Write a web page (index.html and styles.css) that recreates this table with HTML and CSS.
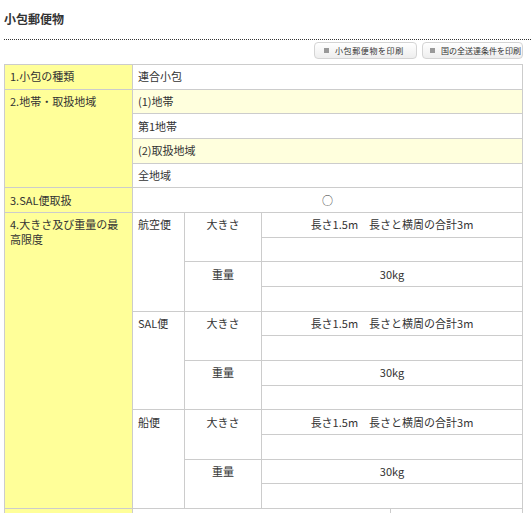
FILE: index.html
```html
<!DOCTYPE html>
<html lang="ja">
<head>
<meta charset="utf-8">
<title>小包郵便物</title>
<link rel="stylesheet" href="styles.css">
</head>
<body>
<h1 class="title">小包郵便物</h1>
<div class="rule"></div>
<div class="actions">
  <span class="btn btn-a"><span class="bullet"></span>小包郵便物を印刷</span>
  <span class="btn btn-b"><span class="bullet"></span>国の全送達条件を印刷</span>
</div>
<table class="info">
  <colgroup>
    <col class="c1"><col class="c2"><col class="c3"><col class="c4">
  </colgroup>
  <tr>
    <th>1.小包の種類</th>
    <td colspan="3">連合小包</td>
  </tr>
  <tr>
    <th rowspan="4">2.地帯・取扱地域</th>
    <td colspan="3" class="sub">(1)地帯</td>
  </tr>
  <tr><td colspan="3">第1地帯</td></tr>
  <tr><td colspan="3" class="sub">(2)取扱地域</td></tr>
  <tr><td colspan="3">全地域</td></tr>
  <tr>
    <th>3.SAL便取扱</th>
    <td colspan="3" class="center">○</td>
  </tr>
  <tr>
    <th rowspan="12">4.大きさ及び重量の最高限度</th>
    <td rowspan="4">航空便</td>
    <td rowspan="2" class="center">大きさ</td>
    <td class="center">長さ1.5m　長さと横周の合計3m</td>
  </tr>
  <tr><td>&nbsp;</td></tr>
  <tr>
    <td rowspan="2" class="center">重量</td>
    <td class="center">30kg</td>
  </tr>
  <tr><td>&nbsp;</td></tr>
  <tr>
    <td rowspan="4">SAL便</td>
    <td rowspan="2" class="center">大きさ</td>
    <td class="center">長さ1.5m　長さと横周の合計3m</td>
  </tr>
  <tr><td>&nbsp;</td></tr>
  <tr>
    <td rowspan="2" class="center">重量</td>
    <td class="center">30kg</td>
  </tr>
  <tr><td>&nbsp;</td></tr>
  <tr>
    <td rowspan="4">船便</td>
    <td rowspan="2" class="center">大きさ</td>
    <td class="center">長さ1.5m　長さと横周の合計3m</td>
  </tr>
  <tr><td>&nbsp;</td></tr>
  <tr>
    <td rowspan="2" class="center">重量</td>
    <td class="center">30kg</td>
  </tr>
  <tr><td>&nbsp;</td></tr>
  <tr>
    <th>&nbsp;</th>
    <td colspan="3" class="split">
      <div class="split-row"><div class="split-a">&nbsp;</div><div class="split-b">&nbsp;</div></div>
    </td>
  </tr>
</table>
</body>
</html>
```

FILE: styles.css
```css
html, body {
  margin: 0;
  padding: 0;
  background: #fff;
}
body {
  font-family: "Noto Sans CJK JP", "Noto Sans", sans-serif;
  color: #333;
  font-size: 11px;
}
.title {
  margin: 0;
  padding: 10px 0 0 4px;
  font-size: 12px;
  line-height: 17px;
  font-weight: bold;
  color: #333;
}
.rule {
  margin: 12px 0 0 4px;
  border-top: 1px dotted #333;
}
.actions {
  display: flex;
  justify-content: flex-end;
  gap: 5px;
  padding: 2px 8px 0 0;
  height: 17px;
}
.btn {
  box-sizing: border-box;
  height: 17px;
  display: flex;
  align-items: center;
  border: 1px solid #d4d4d4;
  border-radius: 4px;
  background: linear-gradient(#ffffff, #eeeeee);
  font-size: 8px;
  color: #333;
  padding-left: 9px;
  white-space: nowrap;
}
.btn-a { width: 103px; letter-spacing: 0.6px; }
.btn-b { width: 101px; padding-left: 7px; }
.bullet {
  display: inline-block;
  width: 5px;
  height: 5px;
  background: #999;
  margin-right: 6px;
  flex: none;
}
.info {
  margin: 5px 0 0 4px;
  border-collapse: collapse;
  table-layout: fixed;
  width: 518px;
}
.c1 { width: 128px; }
.c2 { width: 52px; }
.c3 { width: 77px; }
.c4 { width: 261px; }
.info th,
.info td {
  border: 1px solid #cccccc;
  padding: 4.33px 5px 4.34px;
  line-height: 15px;
  font-weight: normal;
  text-align: left;
  vertical-align: top;
  font-size: 11px;
}
.info th {
  background: #ffff99;
}
.info td.sub {
  background: #ffffdd;
}
.info td.center {
  text-align: center;
}
.info td.split {
  padding: 0;
}
.split-row {
  display: flex;
}
.split-a {
  width: 258px;
  border-right: 1px solid #cccccc;
  padding: 4.33px 5px 4.34px;
  box-sizing: border-box;
}
.split-b {
  flex: 1;
  padding: 4.33px 5px 4.34px;
}
```
